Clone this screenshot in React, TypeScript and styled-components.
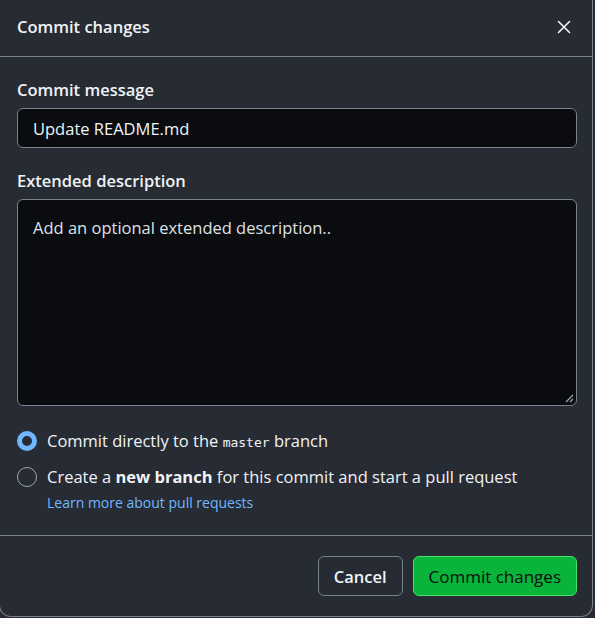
import React from "react";
import styled, { createGlobalStyle } from "styled-components";

const Global = createGlobalStyle`
  html, body { margin: 0; padding: 0; background: #272b33; }
  body { font-family: "Open Sans", "Noto Sans", sans-serif; color: #f0f3f6; }
  * { box-sizing: border-box; }
`;

const Dialog = styled.div`
  width: 594px;
  height: 618px;
  margin-left: -1px;
  margin-top: -1px;
  background: #272b33;
  border: 1px solid #7a828e;
  border-top: none;
  border-radius: 0 0 12px 12px;
  display: flex;
  flex-direction: column;
`;

const Header = styled.div`
  height: 58px;
  flex: none;
  display: flex;
  align-items: center;
  justify-content: space-between;
  padding: 0 16px 0 17px;
  border-bottom: 1px solid #7a828e;
`;

const Title = styled.h1`
  margin: 0;
  font-size: 16.5px;
  font-weight: 600;
  margin-top: -2px;
`;

const CloseButton = styled.button`
  background: none;
  border: none;
  padding: 0;
  width: 24px;
  height: 24px;
  display: flex;
  align-items: center;
  justify-content: center;
  color: #f0f3f6;
  margin-top: -2px;
`;

const Body = styled.div`
  flex: 1;
  padding: 21px 15px 0 17px;
  display: flex;
  flex-direction: column;
`;

const Label = styled.label`
  font-size: 16.5px;
  font-weight: 600;
  line-height: 24px;
  margin-bottom: 6px;
`;

const Input = styled.div`
  height: 40px;
  border: 1px solid #7a828e;
  border-radius: 6px;
  background: #0a0c10;
  padding: 0 15px;
  display: flex;
  align-items: center;
  font-size: 16.5px;
  margin-bottom: 21px;
`;

const TextArea = styled.div`
  position: relative;
  height: 207px;
  border: 1px solid #7a828e;
  border-radius: 6px;
  background: #0a0c10;
  padding: 16px 15px;
  font-size: 16.5px;
  line-height: 24px;
  color: #dde2e7;
`;

const Grip = styled.svg`
  position: absolute;
  right: 2px;
  bottom: 2px;
`;

const Options = styled.div`
  margin-top: 23px;
  display: flex;
  flex-direction: column;
  gap: 12px;
`;

const OptionRow = styled.div`
  display: flex;
  align-items: flex-start;
  gap: 10px;
`;

const Radio = styled.span<{ $checked?: boolean }>`
  width: 20px;
  height: 20px;
  flex: none;
  border-radius: 50%;
  margin-top: 2px;
  border: ${(p) => (p.$checked ? "5px solid #71b7ff" : "1px solid #9ea7b3")};
  background: ${(p) => (p.$checked ? "#272b33" : "transparent")};
`;

const OptionText = styled.div`
  display: flex;
  flex-direction: column;
  font-size: 16.5px;
  line-height: 24px;
`;

const OptionLine = styled.span`
  height: 24px;
  white-space: nowrap;
`;

const Code = styled.code`
  font-family: "DejaVu Sans Mono", "Liberation Mono", monospace;
  font-size: 13px;
  line-height: 1;
`;

const Link = styled.a`
  font-size: 14px;
  line-height: 20px;
  margin-top: 4px;
  color: #71b7ff;
  text-decoration: none;
`;

const Footer = styled.div`
  height: 81px;
  flex: none;
  border-top: 1px solid #7a828e;
  display: flex;
  align-items: center;
  justify-content: flex-end;
  gap: 10px;
  padding: 0 15px 0 0;
`;

const Button = styled.button<{ $primary?: boolean }>`
  height: 40px;
  border-radius: 6px;
  padding: 0 15px;
  font-family: inherit;
  font-size: ${(p) => (p.$primary ? "17px" : "16.5px")};
  font-weight: ${(p) => (p.$primary ? 400 : 600)};
  color: ${(p) => (p.$primary ? "#0a0c10" : "#f0f3f6")};
  background: ${(p) => (p.$primary ? "#09b43a" : "#272b33")};
  border: 1px solid ${(p) => (p.$primary ? "#4ae168" : "#7a828e")};
`;

export default function App() {
  return (
    <>
      <Global />
      <Dialog>
        <Header>
          <Title>Commit changes</Title>
          <CloseButton aria-label="Close">
            <svg width="14" height="14" viewBox="0 0 14 14" fill="none" stroke="currentColor" strokeWidth="1.6" strokeLinecap="round">
              <path d="M1.5 1.5 L12.5 12.5 M12.5 1.5 L1.5 12.5" />
            </svg>
          </CloseButton>
        </Header>
        <Body>
          <Label>Commit message</Label>
          <Input>Update README.md</Input>
          <Label>Extended description</Label>
          <TextArea>
            Add an optional extended description..
            <Grip width="10" height="10" viewBox="0 0 10 10">
              <path d="M9 2 L2 9 M9 6 L6 9" stroke="#9ea7b3" strokeWidth="1.2" />
            </Grip>
          </TextArea>
          <Options>
            <OptionRow>
              <Radio $checked />
              <OptionText>
                <OptionLine>
                  Commit directly to the <Code>master</Code> branch
                </OptionLine>
              </OptionText>
            </OptionRow>
            <OptionRow>
              <Radio />
              <OptionText>
                <OptionLine>
                  Create a <strong>new branch</strong> for this commit and start a pull request
                </OptionLine>
                <Link href="#">Learn more about pull requests</Link>
              </OptionText>
            </OptionRow>
          </Options>
        </Body>
        <Footer>
          <Button>Cancel</Button>
          <Button $primary>Commit changes</Button>
        </Footer>
      </Dialog>
    </>
  );
}
